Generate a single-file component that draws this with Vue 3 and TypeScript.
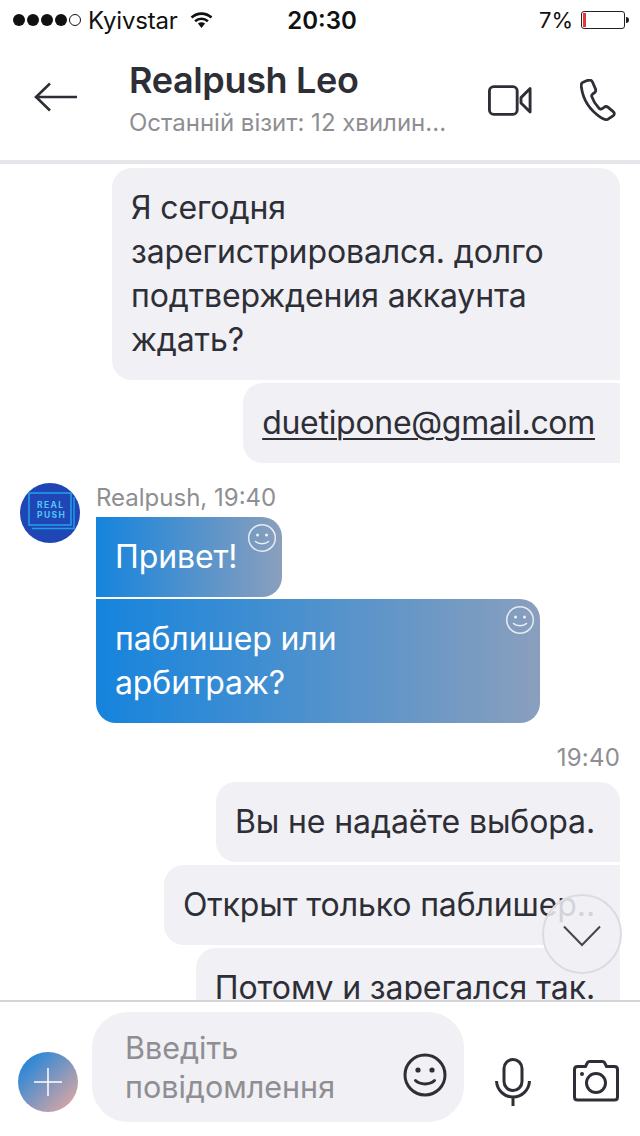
<script setup lang="ts">
interface Bubble { lines: string[]; cls: string; link?: boolean }
const topBubbles: Bubble[] = [
  { lines: ['Я сегодня', 'зарегистрировался. долго', 'подтверждения аккаунта', 'ждать?'], cls: 'first wide' },
  { lines: ['duetipone@gmail.com'], cls: 'mid', link: true },
]
const bottomBubbles: Bubble[] = [
  { lines: ['Вы не надаёте выбора.'], cls: 'first' },
  { lines: ['Открыт только паблишер..'], cls: 'mid' },
  { lines: ['Потому и зарегался так.'], cls: 'mid' },
]
const blueBubbles = [
  { lines: ['Привет!'], cls: 'blue-first' },
  { lines: ['паблишер или', 'арбитраж?'], cls: 'blue-last' },
]
const dots = [1, 2, 3, 4]
</script>

<template>
  <div class="app">
    <div class="status">
      <div class="status-left">
        <span class="dots">
          <i v-for="d in dots" :key="d" class="dot"></i>
          <i class="dot empty"></i>
        </span>
        <span class="carrier">Kyivstar</span>
        <svg class="wifi" width="23" height="18" viewBox="0 0 22 18">
          <path d="M1 6.5C6.8 1.3 15.2 1.3 21 6.5" fill="none" stroke="#111" stroke-width="2.6" />
          <path d="M4.6 10.2C8.3 6.9 13.7 6.9 17.4 10.2" fill="none" stroke="#111" stroke-width="2.6" />
          <path d="M7.4 12.6C9.6 10.9 12.4 10.9 14.6 12.6L11 17Z" fill="#111" />
        </svg>
      </div>
      <div class="clock">20:30</div>
      <div class="status-right">
        <span class="pct">7%</span>
        <span class="battery"><i class="charge"></i></span>
        <i class="nub"></i>
      </div>
    </div>

    <header class="nav">
      <svg class="back" width="44" height="30" viewBox="0 0 44 30">
        <path d="M43 15H2M16 1.5L2 15l14 13.5" fill="none" stroke="#2e2e36" stroke-width="2.6" />
      </svg>
      <div class="title-block">
        <div class="title">Realpush Leo</div>
        <div class="subtitle">Останній візит: 12 хвилин...</div>
      </div>
      <svg class="video" width="44" height="31" viewBox="0 0 46 32">
        <rect x="1.5" y="1.5" width="29" height="29" rx="4.5" fill="none" stroke="#2e2e36" stroke-width="3" />
        <path d="M44 3.5V28L34.5 18.5V13Z" fill="none" stroke="#2e2e36" stroke-width="3" stroke-linejoin="round" />
      </svg>
      <svg class="phone" width="36" height="42" viewBox="0 0 36 42">
        <path d="M6.5 1.8L2.6 3.6C1.4 4.2 1 6 1.4 8.4C3 20 9.5 31 21 38.6C24 40.6 26.5 41 28 40.2L33 36.8C34.8 35.5 34.7 33.8 33.2 32.6L28.2 28.4C26.8 27.3 25.3 27.3 24 28.3L21.8 29.8C20.8 30.4 19.8 30.2 19 29.3C15.6 25.8 13.2 21.8 11.8 17.6C11.4 16.5 11.8 15.7 12.7 15L14.6 13.6C15.8 12.6 16 11.3 15.4 9.8L12.6 3.2C11.7 1.2 9.5 .6 6.5 1.8Z" fill="none" stroke="#2e2e36" stroke-width="2.8" stroke-linejoin="round" />
      </svg>
    </header>

    <main class="messages">
      <section class="group right">
        <div v-for="(b, i) in topBubbles" :key="i" class="bubble" :class="b.cls">
          <template v-for="(line, j) in b.lines" :key="j">
            <span :class="{ link: b.link }">{{ line }}</span><br v-if="j < b.lines.length - 1" />
          </template>
        </div>
      </section>

      <section class="incoming">
        <div class="avatar">
          <svg width="60" height="60" viewBox="0 0 60 60">
            <circle cx="30" cy="30" r="30" fill="#1f46b4" />
            <path d="M12 45.5H54V14" fill="none" stroke="#1e9ee6" stroke-width="1.4" />
            <rect x="9" y="10" width="42" height="32" fill="#1f46b4" stroke="#22a8f0" stroke-width="1.4" />
            <text class="logo"><tspan x="17" y="24.8">REAL</tspan><tspan x="17" y="35.2">PUSH</tspan></text>
          </svg>
        </div>
        <div class="incoming-body">
          <div class="meta">Realpush, 19:40</div>
          <div v-for="(b, i) in blueBubbles" :key="i" class="bubble blue" :class="b.cls">
            <template v-for="(line, j) in b.lines" :key="j">
              {{ line }}<br v-if="j < b.lines.length - 1" />
            </template>
            <svg class="react" width="30" height="30" viewBox="0 0 30 30">
              <circle cx="15" cy="15" r="13.3" fill="none" stroke="#fff" stroke-opacity=".8" stroke-width="1.5" />
              <circle cx="10.5" cy="12" r="1.5" fill="#fff" fill-opacity=".85" />
              <circle cx="19.5" cy="12" r="1.5" fill="#fff" fill-opacity=".85" />
              <path d="M8.5 18.5C11.5 21.5 18.5 21.5 21.5 18.5" fill="none" stroke="#fff" stroke-opacity=".85" stroke-width="1.5" stroke-linecap="round" />
            </svg>
          </div>
        </div>
      </section>

      <div class="time">19:40</div>

      <section class="group right">
        <div v-for="(b, i) in bottomBubbles" :key="i" class="bubble" :class="b.cls">{{ b.lines[0] }}</div>
      </section>

      <div class="scroll-down">
        <svg width="38" height="22" viewBox="0 0 38 22">
          <path d="M1 1.5L19 20L37 1.5" fill="none" stroke="#45454d" stroke-width="2" />
        </svg>
      </div>
    </main>

    <footer class="composer">
      <div class="plus">
        <svg width="30" height="30" viewBox="0 0 30 30">
          <path d="M15 1V29M1 15H29" stroke="#fff" stroke-width="1.5" />
        </svg>
      </div>
      <div class="input">
        <div class="placeholder">Введіть<br />повідомлення</div>
        <svg class="smile" width="44" height="44" viewBox="0 0 44 44">
          <circle cx="22" cy="22" r="20" fill="none" stroke="#2e2e36" stroke-width="3" />
          <circle cx="15" cy="17" r="2.6" fill="#2e2e36" />
          <circle cx="29" cy="17" r="2.6" fill="#2e2e36" />
          <path d="M12.5 27.5C17 32 27 32 31.5 27.5" fill="none" stroke="#2e2e36" stroke-width="3" stroke-linecap="round" />
        </svg>
      </div>
      <svg class="mic" width="36" height="48" viewBox="0 0 36 48">
        <rect x="9" y="1.5" width="18" height="31" rx="9" fill="none" stroke="#2e2e36" stroke-width="3" />
        <path d="M1.5 23C2 32 9 39 18 39C27 39 34 32 34.5 23M18 39V48" fill="none" stroke="#2e2e36" stroke-width="3" />
      </svg>
      <svg class="camera" width="46" height="42" viewBox="0 0 46 42">
        <path d="M4.5 6.5H12.5L14.5 2.5C15 1.8 15.5 1.5 16.5 1.5H29.5C30.5 1.5 31 1.8 31.5 2.5L33.5 6.5H41.5C43.5 6.5 44.5 7.5 44.5 9.5V37C44.5 39 43.5 40 41.5 40H4.5C2.5 40 1.5 39 1.5 37V9.5C1.5 7.5 2.5 6.5 4.5 6.5Z" fill="none" stroke="#2e2e36" stroke-width="3" />
        <circle cx="23" cy="23" r="9.5" fill="none" stroke="#2e2e36" stroke-width="3" />
        <circle cx="9" cy="14" r="2" fill="#2e2e36" />
      </svg>
    </footer>
  </div>
</template>

<style>
html, body { margin: 0; background: #fff; }
</style>

<style scoped>
.app {
  width: 640px;
  height: 1136px;
  display: flex;
  flex-direction: column;
  overflow: hidden;
  background: #fff;
  color: #2e2e36;
  font-family: Inter, "Noto Sans", sans-serif;
}
.status {
  height: 40px;
  flex: none;
  display: grid;
  grid-template-columns: 1fr auto 1fr;
  align-items: center;
  padding: 0 11px 0 13px;
  color: #111;
  font-size: 24px;
}
.status-left, .status-right { display: flex; align-items: center; }
.status-right { justify-content: flex-end; }
.dots { display: flex; gap: 2px; margin-right: 7px; }
.dot { width: 12px; height: 12px; border-radius: 50%; background: #111; box-sizing: border-box; }
.dot.empty { background: none; border: 1px solid #111; }
.carrier { letter-spacing: -.2px; }
.wifi { margin-left: 12px; }
.clock { font-weight: 600; font-size: 24px; padding-left: 2px; }
.pct { margin-right: 8px; font-size: 22px; }
.battery {
  width: 40px;
  height: 14px;
  padding: 1px;
  border: 1px solid #222;
  border-radius: 3px;
  display: flex;
}
.charge { width: 3px; background: #e5353b; }
.nub { width: 3px; height: 6px; background: #222; margin-left: 1px; border-radius: 0 3px 3px 0; }

.nav {
  height: 124px;
  flex: none;
  display: flex;
  align-items: center;
  box-sizing: border-box;
  border-bottom: 4px solid #e6e6ea;
  padding: 0 24px 0 34px;
}
.back { margin-bottom: 6px; flex: none; }
.title-block { margin-left: 51px; flex: 1; margin-top: -3px; }
.title { font-size: 36px; font-weight: 600; line-height: 40px; letter-spacing: -.35px; }
.subtitle { margin-top: 9px; font-size: 24px; line-height: 28px; color: #8e8e93; white-space: nowrap; }
.video { flex: none; }
.phone { margin-left: 48px; flex: none; }

.messages {
  flex: 1;
  min-height: 0;
  overflow: hidden;
  position: relative;
  padding: 4px 20px 0;
  display: flex;
  flex-direction: column;
}
.group { display: flex; flex-direction: column; gap: 3px; flex: none; }
.right { align-items: flex-end; }
.bubble {
  background: #f0f0f5;
  padding: 18px 25px 18px 19px;
  font-size: 32px;
  letter-spacing: -.12px;
  line-height: 44px;
  white-space: nowrap;
  position: relative;
}
.first { border-radius: 20px 20px 0 20px; }
.mid { border-radius: 20px 0 0 20px; }
.wide { width: 508px; box-sizing: border-box; }
.link { letter-spacing: -.3px; text-decoration: underline; text-underline-offset: 4px; text-decoration-thickness: 2px; }
.incoming { display: flex; gap: 16px; margin-top: 20px; flex: none; }
.avatar { width: 60px; height: 60px; flex: none; }
.avatar svg { display: block; }
.logo { font: 700 8.5px Inter, sans-serif; fill: #4cc8fa; letter-spacing: 1.4px; }
.incoming-body { display: flex; flex-direction: column; align-items: flex-start; gap: 2px; }
.meta { font-size: 24px; line-height: 30px; height: 32px; color: #8e8e93; }
.blue {
  background: linear-gradient(90deg, #1584dd, #8a9fbd);
  color: #fff;
}
.blue-first { width: 186px; box-sizing: border-box; border-radius: 0 20px 20px 0; }
.blue-last { width: 444px; box-sizing: border-box; border-radius: 0 20px 20px 20px; }
.react { position: absolute; top: 6px; right: 5px; }
.time { flex: none; text-align: right; font-size: 24px; letter-spacing: .2px; line-height: 30px; color: #8e8e93; margin: 20px 0 9px; }
.scroll-down {
  position: absolute;
  left: 542px;
  top: 730px;
  width: 80px;
  height: 80px;
  box-sizing: border-box;
  border-radius: 50%;
  border: 2px solid #dcdce0;
  background: rgba(240, 240, 245, .85);
  display: flex;
  align-items: center;
  justify-content: center;
  padding-top: 4px;
}

.composer {
  height: 136px;
  flex: none;
  box-sizing: border-box;
  border-top: 2px solid #d4d4d6;
  background: #fff;
  display: flex;
  padding: 10px 0 0 18px;
  align-items: flex-start;
}
.plus {
  width: 60px;
  height: 60px;
  margin-top: 40px;
  border-radius: 50%;
  background: linear-gradient(135deg, #1f85dc 10%, #e4a8a0 95%);
  display: flex;
  align-items: center;
  justify-content: center;
  flex: none;
}
.input {
  margin-left: 14px;
  width: 372px;
  height: 110px;
  border-radius: 36px;
  background: #f0f0f5;
  box-sizing: border-box;
  padding: 16px 17px 0 33px;
  display: flex;
  justify-content: space-between;
  flex: none;
}
.placeholder { font-size: 30.5px; line-height: 39px; color: #8e8e93; white-space: nowrap; }
.smile { margin-top: 25px; }
.mic { margin: 46px 0 0 31px; flex: none; }
.camera { margin: 48px 0 0 42px; flex: none; }
</style>
